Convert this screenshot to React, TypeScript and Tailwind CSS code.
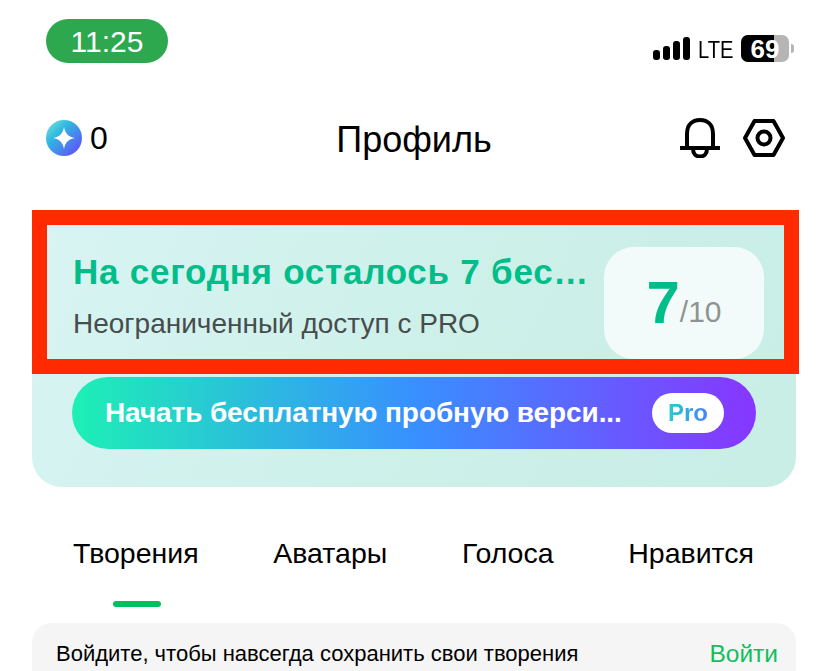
const FONT = "font-['Liberation_Sans',sans-serif]";

const TABS = ["Творения", "Аватары", "Голоса", "Нравится"];

function BellIcon() {
  return (
    <svg width="40" height="40" viewBox="0 0 40 40" fill="none" stroke="#000" strokeWidth="4">
      <path d="M7 30 V16 C7 7 12 2 20 2 C28 2 33 7 33 16 V30" />
      <path d="M0 30 H40" />
      <path d="M13 31 C13 36 16 38.5 20 38.5 C24 38.5 27 36 27 31" />
    </svg>
  );
}

function GearIcon() {
  return (
    <svg width="42" height="38" viewBox="0 0 42 38" fill="none" stroke="#000" strokeWidth="4" strokeLinejoin="round">
      <path d="M11.5 2 H30.5 L40 19 L30.5 36 H11.5 L2 19 Z" />
      <circle cx="21" cy="19" r="6.5" />
    </svg>
  );
}

function SignalBars() {
  return (
    <div className="flex items-end gap-[3px]">
      <div className="w-[7px] h-[10px] rounded-[3px] bg-black" />
      <div className="w-[7px] h-[14px] rounded-[3px] bg-black" />
      <div className="w-[7px] h-[19px] rounded-[3px] bg-black" />
      <div className="w-[7px] h-[23px] rounded-[3px] bg-black" />
    </div>
  );
}

function Battery() {
  return (
    <div className="flex items-center">
      <div className="relative w-[48px] h-[27px] rounded-[7px] overflow-hidden flex bg-[#b5b5b5]">
        <div className="w-[33px] bg-black" />
        <span className="absolute inset-0 flex items-center justify-center text-white text-[26px] font-bold leading-none">69</span>
      </div>
      <div className="ml-[2px] w-[3px] h-[9px] rounded-r-full bg-[#b5b5b5]" />
    </div>
  );
}

export default function App() {
  return (
    <div className={`relative w-[828px] h-[671px] overflow-hidden bg-white ${FONT}`}>
      {/* status bar */}
      <div className="flex justify-between pl-[46px] pr-[34px] pt-[19px] h-[98px]">
        <div className="w-[122px] h-[44px] rounded-full bg-[#2ea84f] text-white text-[30px] flex items-center justify-center">11:25</div>
        <div className="flex items-center h-[27px] mt-[16px]">
          <SignalBars />
          <span className="ml-[8px] mr-[8px] w-[35px] pt-[2px] text-[24px] text-black scale-x-[0.84] origin-left">LTE</span>
          <Battery />
        </div>
      </div>

      {/* header */}
      <div className="relative flex items-center justify-between pl-[46px] pr-[43px] h-[80px]">
        <div className="flex items-center gap-[8px]">
          <div className="w-[36px] h-[36px] rounded-full bg-[linear-gradient(135deg,#7fe9dc_0%,#2fb8e0_35%,#6a3dff_100%)] flex items-center justify-center">
            <svg width="22" height="22" viewBox="0 0 20 20" fill="#fff">
              <path d="M10 0 C11 6 14 9 20 10 C14 11 11 14 10 20 C9 14 6 11 0 10 C6 9 9 6 10 0 Z" />
            </svg>
          </div>
          <span className="text-[32px] text-black">0</span>
        </div>
        <span className="absolute left-0 right-0 pt-[3px] text-center text-[36px] text-black">Профиль</span>
        <div className="relative flex items-center gap-[23px]">
          <BellIcon />
          <GearIcon />
        </div>
      </div>

      {/* trial card */}
      <div className="mx-[32px] mt-[32px] w-[764px] h-[277px] rounded-[30px] bg-[linear-gradient(115deg,#d8f4f3_0%,#cdf0e9_55%,#c8eee6_100%)] pl-[41px] pr-[32px] pt-[37px]">
        <div className="flex justify-between">
          <div className="w-[516px] pt-[5px]">
            <div className="text-[35px] font-bold text-[#00bd8a] tracking-[0.75px] whitespace-nowrap leading-[40px]">На сегодня осталось 7 бес…</div>
            <div className="mt-[15px] text-[28px] text-[#474c4c] leading-[34px] whitespace-nowrap">Неограниченный доступ с PRO</div>
          </div>
          <div className="w-[160px] h-[112px] rounded-[30px] bg-white/75 flex items-end justify-center pb-[31px]">
            <span className="text-[60px] font-bold text-[#00bd8a] leading-[50px]">7</span>
            <span className="text-[30px] text-[#8f9392] leading-[32px]">/10</span>
          </div>
        </div>
        <div className="-ml-px mt-[18px] w-[684px] h-[72px] rounded-full bg-[linear-gradient(90deg,#1df0b5_0%,#3890ff_50%,#8736ff_100%)] flex items-center justify-between pl-[33px] pr-[32px]">
          <span className="text-white text-[28px] font-bold tracking-[-0.1px] whitespace-nowrap">Начать бесплатную пробную верси...</span>
          <span className="w-[72px] h-[40px] rounded-full bg-white flex items-center justify-center text-[24px] font-bold">
            <span className="bg-[linear-gradient(90deg,#25cfc8,#4a7dff)] bg-clip-text text-transparent">Pro</span>
          </span>
        </div>
      </div>

      {/* tabs */}
      <div className="flex justify-between pl-[73px] pr-[74px] mt-[49px] h-[34px]">
        {TABS.map((t) => (
          <span key={t} className="text-[28.5px] text-black leading-[34px]">{t}</span>
        ))}
      </div>
      <div className="ml-[113px] mt-[31px] w-[48px] h-[6px] rounded-full bg-[#00c060]" />

      {/* login banner */}
      <div className="mx-[32px] mt-[16px] w-[764px] h-[80px] rounded-t-[20px] bg-[#f5f5f5] flex items-start justify-between pl-[24px] pr-[18px] pt-[15px]">
        <span className="text-[22px] text-black leading-[32px] whitespace-nowrap">Войдите, чтобы навсегда сохранить свои творения</span>
        <span className="text-[24.5px] text-[#10c060] leading-[32px]">Войти</span>
      </div>

      {/* red highlight */}
      <div className="absolute left-[32px] top-[210px] w-[767px] h-[164px] border-[15px] border-[#ff2a00]" />
    </div>
  );
}
